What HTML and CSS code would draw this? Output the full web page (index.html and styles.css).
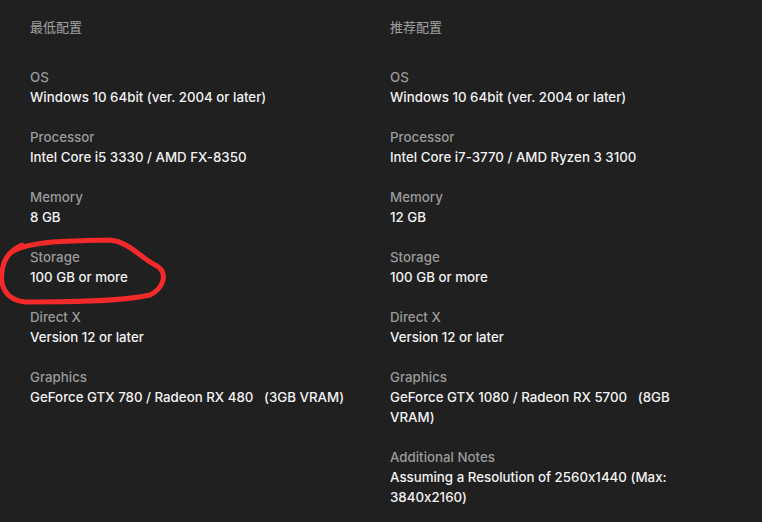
FILE: index.html
```html
<!DOCTYPE html>
<html lang="zh">
<head>
<meta charset="utf-8">
<link rel="stylesheet" href="styles.css">
</head>
<body>
<div class="specs">
  <section class="col">
    <h2 class="col-title">最低配置</h2>
    <dl class="list">
      <div class="item"><dt>OS</dt><dd>Windows 10 64bit (ver. 2004 or later)</dd></div>
      <div class="item"><dt>Processor</dt><dd>Intel Core i5 3330 / AMD FX-8350</dd></div>
      <div class="item"><dt>Memory</dt><dd>8 GB</dd></div>
      <div class="item"><dt>Storage</dt><dd>100 GB or more</dd></div>
      <div class="item"><dt>Direct X</dt><dd>Version 12 or later</dd></div>
      <div class="item"><dt>Graphics</dt><dd>GeForce GTX 780 / Radeon RX 480 &nbsp; (3GB VRAM)</dd></div>
    </dl>
  </section>
  <section class="col">
    <h2 class="col-title">推荐配置</h2>
    <dl class="list">
      <div class="item"><dt>OS</dt><dd>Windows 10 64bit (ver. 2004 or later)</dd></div>
      <div class="item"><dt>Processor</dt><dd>Intel Core i7-3770 / AMD Ryzen 3 3100</dd></div>
      <div class="item"><dt>Memory</dt><dd>12 GB</dd></div>
      <div class="item"><dt>Storage</dt><dd>100 GB or more</dd></div>
      <div class="item"><dt>Direct X</dt><dd>Version 12 or later</dd></div>
      <div class="item"><dt>Graphics</dt><dd>GeForce GTX 1080 / Radeon RX 5700 &nbsp; (8GB VRAM)</dd></div>
      <div class="item"><dt>Additional Notes</dt><dd>Assuming a Resolution of 2560x1440 (Max: 3840x2160)</dd></div>
    </dl>
  </section>
</div>
<svg class="scribble" width="762" height="522" viewBox="0 0 762 522">
  <path d="M 12 252 C 30 240, 80 241, 110 240 C 130 242, 140 258, 157 266 C 168 273, 164 288, 150 295 C 120 302, 60 302, 25 302 C 5 300, 0 285, 2 272 C 3 262, 8 251, 22 245" fill="none" stroke="#f42a2a" stroke-width="5" stroke-linecap="round" stroke-linejoin="round"/>
</svg>
</body>
</html>
```
FILE: styles.css
```css
html, body {
  margin: 0;
  padding: 0;
  background: #202020;
}
body {
  width: 762px;
  height: 522px;
  overflow: hidden;
  position: relative;
  font-family: Inter, "Noto Sans", "Noto Sans CJK SC", sans-serif;
  font-size: 13.3px;
  line-height: 20px;
  font-feature-settings: "calt" 0;
}
.specs {
  display: grid;
  grid-template-columns: 330px 300px;
  column-gap: 30px;
  padding: 17px 30px 0;
}
.col-title {
  margin: 0 0 30px;
  font-size: 13px;
  font-weight: 400;
  line-height: 20px;
  color: #a0a0a0;
  font-family: "Noto Sans CJK SC", sans-serif;
}
.list {
  margin: 0;
  display: flex;
  flex-direction: column;
  gap: 20px;
}
.item dt {
  color: #9a9a9a;
  font-weight: 500;
}
.item dd {
  margin: 0;
  color: #f2f2f2;
  font-weight: 500;
}
.scribble {
  position: absolute;
  left: 0;
  top: 0;
  pointer-events: none;
}
```
